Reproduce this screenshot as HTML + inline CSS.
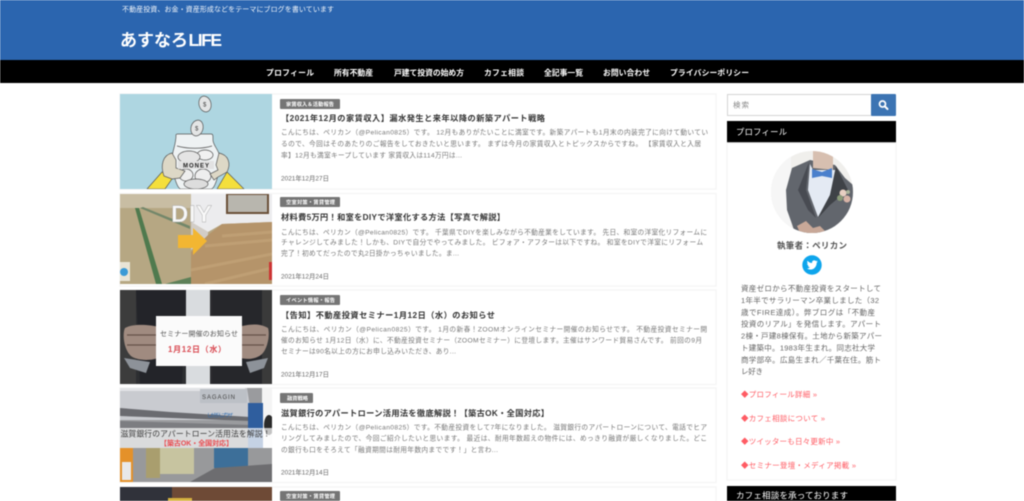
<!DOCTYPE html>
<html lang="ja"><head><meta charset="utf-8"><title>あすなろLIFE</title>
<style>
html,body{margin:0;padding:0;background:#fff;width:1024px;height:501px;overflow:hidden}
svg{display:block;filter:blur(.4px)}
text{font-family:"Liberation Sans","Noto Sans CJK JP",sans-serif}
.b{font-size:6.7px;fill:#777}
.t{font-size:8.2px;fill:#333;font-weight:700}
.d{font-size:6.4px;fill:#666}
.g{font-size:5.2px;fill:#fff;font-weight:700}
.n{font-size:7.8px;fill:#fff;font-weight:700}
.s{font-size:7.5px;fill:#666}
.l{font-size:7.5px;fill:#ff5c64}
</style></head><body>
<svg width="1024" height="501" viewBox="0 0 1024 501" xmlns="http://www.w3.org/2000/svg">
<defs>
<clipPath id="c1"><rect x="120" y="94" width="152" height="95"/></clipPath>
<clipPath id="c2"><rect x="120" y="194" width="152" height="90"/></clipPath>
<clipPath id="c3"><rect x="120" y="290" width="152" height="94"/></clipPath>
<clipPath id="c4"><rect x="120" y="388" width="152" height="94"/></clipPath>
<clipPath id="c5"><rect x="120" y="487" width="152" height="14"/></clipPath>
<clipPath id="av"><circle cx="812" cy="192" r="41"/></clipPath>
</defs>
<rect width="1024" height="501" fill="#fff"/>
<!-- header -->
<rect width="1024" height="60" fill="#2b65af"/>
<rect y="60" width="1024" height="23" fill="#000"/>
<text x="122" y="11.500" font-size="7px" fill="#f2f6fb" textLength="212">不動産投資、お金・資産形成などをテーマにブログを書いています</text>
<text x="120" y="46" font-size="17px" font-weight="700" fill="#fff" textLength="68">あすなろ</text>
<text x="188.500" y="46" font-size="17.500px" font-weight="700" fill="#fff" textLength="33.500">LIFE</text>
<text class="n" x="266" y="75.500" textLength="48">プロフィール</text>
<text class="n" x="334" y="75.500" textLength="39">所有不動産</text>
<text class="n" x="394" y="75.500" textLength="70">戸建て投資の始め方</text>
<text class="n" x="484" y="75.500" textLength="40">カフェ相談</text>
<text class="n" x="544" y="75.500" textLength="39">全記事一覧</text>
<text class="n" x="603" y="75.500" textLength="47">お問い合わせ</text>
<text class="n" x="670" y="75.500" textLength="79">プライバシーポリシー</text>
<!-- cards -->
<g fill="#fff" stroke="#f6f6f6" stroke-width="1.500">
<rect x="120" y="94" width="596" height="95"/>
<rect x="120" y="193.500" width="596" height="92.500"/>
<rect x="120" y="290" width="596" height="94.500"/>
<rect x="120" y="388" width="596" height="94.500"/>
<rect x="120" y="487" width="596" height="20"/>
</g>
<!-- thumb 1 -->
<g clip-path="url(#c1)">
<rect x="120" y="94" width="152" height="95" fill="#aed6e1"/>
<g stroke="#555" stroke-width=".7">
<path d="M147 189L162 172L172 179L165 189Z" fill="#f4df3c"/>
<path d="M217 189L227 172L244 189Z" fill="#f4df3c"/>
<path d="M176 135C176 134 177 134 178 134L211 134C213 134 213 135 213 140C213 146 220 150 220 160C220 172 215 189 211 189L181 189C177 189 172 172 172 160C172 150 176 146 176 135Z" fill="#eef2f3"/>
<path d="M177 146C188 149 202 149 212 146" fill="none"/>
<ellipse cx="205" cy="155" rx="8" ry="5" fill="#f1f1f1"/><ellipse cx="189" cy="157" rx="11" ry="6" fill="#e4e4e4"/>
<ellipse cx="203" cy="176" rx="8" ry="7" fill="#eee"/><ellipse cx="186" cy="175" rx="7" ry="6" fill="#eee"/><ellipse cx="196" cy="184" rx="12" ry="5" fill="#ddd"/>
<path d="M164 176C160 165 163 155 172 153L176 160L176 168L185 171L180 178L172 179Z" fill="#ddd8c6"/>
<path d="M227 172C231 164 229 155 219 153L216 165L218 170L210 174L214 180L218 177Z" fill="#ddd8c6"/>
<ellipse cx="197" cy="128" rx="6" ry="8" fill="#e3e5e5" transform="rotate(15 197 128)"/>
<ellipse cx="205" cy="104" rx="6" ry="8" fill="#e3e5e5" transform="rotate(-15 205 104)"/>
</g>
<rect x="178" y="161" width="36" height="8" fill="#e2e2e2"/>
<text x="183" y="167.500" font-size="6px" font-weight="700" fill="#222" textLength="26">MONEY</text>
<text x="195" y="130.500" font-size="6px" fill="#444">$</text>
<text x="203" y="106.500" font-size="6px" fill="#444">$</text>
</g>
<!-- thumb 2 -->
<g clip-path="url(#c2)">
<rect x="120" y="194" width="152" height="90" fill="#b6a783"/>
<rect x="120" y="194" width="72" height="14" fill="#c8bda3"/>
<path d="M135 208L139 208L162 284L156 284Z" fill="#4f7a4e"/>
<path d="M143 207L190 226L190 229L140 208Z" fill="#73876a"/>
<path d="M165 284L191 277L191 284Z" fill="#5d8058"/>
<path d="M191 194L272 194L272 222L222 224L208 232L191 222Z" fill="#ececee"/>
<path d="M191 222L208 232L208 236L191 250Z" fill="#d2cdc7"/>
<path d="M191 252L208 235L222 224L272 222L272 284L191 284Z" fill="#b5946a"/>
<path d="M191 270L272 254M205 284L272 268M222 236L272 232M205 246L272 240" stroke="#bf9f74" stroke-width="3"/>
<path d="M227 194H268V213H227Z" fill="#b8b6ae" stroke="#6a5038" stroke-width="2"/>
<path d="M178 235H193V228L207 241L193 255V248H178Z" fill="#f2b632"/>
<rect x="120" y="262" width="10" height="19" fill="#e9e4d6"/><circle cx="124" cy="272" r="4" fill="#3a9ad6"/>
<path d="M269 262H272V280H269Z" fill="#c33"/>
<text x="171" y="222" font-size="24px" font-weight="700" fill="#f8f8f8" stroke="#aaa" stroke-width=".4" textLength="41">DIY</text>
</g>
<!-- thumb 3 -->
<g clip-path="url(#c3)">
<rect x="120" y="290" width="152" height="94" fill="#2d2e31"/>
<rect x="120" y="290" width="16" height="94" fill="#3c3c3c"/><rect x="260" y="290" width="12" height="94" fill="#3a3a3a"/>
<path d="M136 290H186L182 384H140Z" fill="#232429"/><path d="M212 290H262V384H212Z" fill="#26272b"/>
<rect x="186" y="290" width="24" height="94" fill="#d9dcdf"/>
<path d="M124 358L150 362L146 373L130 368Z" fill="#8d9299"/><path d="M268 358L246 362L250 373L264 368Z" fill="#8d9299"/>
<path d="M125 328C134 323 150 325 160 327V357C150 362 136 360 131 356C124 350 122 334 125 328Z" fill="#a08b80"/>
<path d="M268 328C258 322 246 325 238 327V357C248 361 258 358 262 354C268 348 270 334 268 328Z" fill="#a08b80"/>
<path d="M127 335H156M127 345H156M240 335H266M240 345H264" stroke="#66524a" stroke-width="1.200"/>
<rect x="156" y="316" width="86" height="50" fill="#fbfbfb"/>
<text x="160" y="336" font-size="7px" fill="#555" textLength="78">セミナー開催のお知らせ</text>
<text x="168" y="352" font-size="8px" font-weight="700" fill="#d94a52" textLength="58">1月12日（水）</text>
</g>
<!-- thumb 4 -->
<g clip-path="url(#c4)">
<rect x="120" y="388" width="152" height="94" fill="#9a9b9e"/>
<rect x="262" y="388" width="10" height="60" fill="#f4f4f4"/>
<ellipse cx="269" cy="425" rx="5" ry="10" fill="#2a2a2a"/>
<path d="M120 388H247L252 420H120Z" fill="#c9cbd0"/>
<path d="M120 388H245V391H120Z" fill="#e2e3e6"/>
<path d="M120 408L170 412L250 417V421L120 416Z" fill="#6a6b70"/>
<path d="M200 389H247V403H200Z" fill="#bcc0c6"/>
<path d="M120 421L250 425V448H120Z" fill="#7c7d81"/>
<rect x="248" y="403" width="15" height="60" fill="#2f5e9e"/>
<text x="202" y="399" font-size="6px" fill="#444" textLength="33">SAGAGIN</text>
<text x="207" y="417" font-size="5px" fill="#2e6bb0" textLength="26">しがぎんプラザ</text>
<rect x="120" y="448" width="152" height="34" fill="#98999b"/>
<rect x="120" y="448" width="13" height="34" fill="#e4912a"/>
<rect x="122" y="462" width="9" height="18" fill="#e8e8e8"/>
<rect x="146" y="448" width="14" height="30" fill="#a99e6e"/>
<rect x="160" y="448" width="34" height="26" fill="#c7c4a0"/>
<rect x="214" y="448" width="34" height="20" fill="#3d6f99"/>
<path d="M120 482L190 482L215 468L272 464V482Z" fill="#6d6d70"/>
<rect x="120" y="428" width="152" height="20" fill="#fff" fill-opacity=".72"/>
<text x="120.500" y="436.500" font-size="7.800px" fill="#3d3d3d" textLength="150">滋賀銀行のアパートローン活用法を解説！</text>
<text x="160" y="445.500" font-size="7px" font-weight="700" fill="#ea4a4f" textLength="73">【築古OK・全国対応】</text>
</g>
<!-- thumb 5 -->
<g clip-path="url(#c5)">
<rect x="120" y="487" width="152" height="14" fill="#30323a"/>
<rect x="172" y="487" width="100" height="14" fill="#6e4a36"/>
<rect x="168" y="498" width="24" height="3" fill="#d7b340"/>
</g>
<!-- card 1 text -->
<rect x="280" y="99" width="60" height="10" rx="1" fill="#757575"/>
<text class="g" x="286" y="106" textLength="48">家賃収入＆活動報告</text>
<text class="t" x="281" y="121" textLength="264">【2021年12月の家賃収入】漏水発生と来年以降の新築アパート戦略</text>
<text class="b" x="281" y="134.500" textLength="427">こんにちは、ペリカン（@Pelican0825）です。 12月もありがたいことに満室です。新築アパートも1月末の内装完了に向けて動いてい</text>
<text class="b" x="281" y="146" textLength="420">るので、今回はそのあたりのご報告をしておきたいと思います。 まずは今月の家賃収入とトピックスからですね。 【家賃収入と入居</text>
<text class="b" x="281" y="157.500" textLength="181">率】12月も満室キープしています 家賃収入は114万円は...</text>
<text class="d" x="281" y="180.500" textLength="48">2021年12月27日</text>
<!-- card 2 text -->
<rect x="280" y="197" width="60" height="10" rx="1" fill="#757575"/>
<text class="g" x="286" y="204" textLength="49">空室対策・賃貸管理</text>
<text class="t" x="281" y="220" textLength="224">材料費5万円！和室をDIYで洋室化する方法【写真で解説】</text>
<text class="b" x="281" y="234.500" textLength="426">こんにちは、ペリカン（@Pelican0825）です。 千葉県でDIYを楽しみながら不動産業をしています。 先日、和室の洋室化リフォームに</text>
<text class="b" x="281" y="244.500" textLength="422">チャレンジしてみました！しかも、DIYで自分でやってみました。 ビフォア・アフターは以下ですね。 和室をDIYで洋室にリフォーム</text>
<text class="b" x="281" y="255.500" textLength="178">完了！初めてだったので丸2日掛かっちゃいました。ま...</text>
<text class="d" x="281" y="278.500" textLength="48">2021年12月24日</text>
<!-- card 3 text -->
<rect x="280" y="295" width="60" height="10" rx="1" fill="#757575"/>
<text class="g" x="286" y="302" textLength="49">イベント情報・報告</text>
<text class="t" x="281" y="318" textLength="214">【告知】不動産投資セミナー1月12日（水）のお知らせ</text>
<text class="b" x="281" y="331.500" textLength="426">こんにちは、ペリカン（@Pelican0825）です。 1月の新春！ZOOMオンラインセミナー開催のお知らせです。 不動産投資セミナー開</text>
<text class="b" x="281" y="342.500" textLength="421">催のお知らせ 1月12日（水）に、不動産投資セミナー（ZOOMセミナー）に登壇します。主催はサンワード貿易さんです。 前回の9月</text>
<text class="b" x="281" y="353.500" textLength="175">セミナーは90名以上の方にお申し込みいただき、あり...</text>
<text class="d" x="281" y="376.500" textLength="48">2021年12月17日</text>
<!-- card 4 text -->
<rect x="280" y="393" width="33" height="10" rx="1" fill="#757575"/>
<text class="g" x="287" y="400" textLength="21">融資戦略</text>
<text class="t" x="281" y="416" textLength="268">滋賀銀行のアパートローン活用法を徹底解説！【築古OK・全国対応】</text>
<text class="b" x="281" y="429.500" textLength="426">こんにちは、ペリカン（@Pelican0825）です。不動産投資をして7年になりました。 滋賀銀行のアパートローンについて、電話でヒア</text>
<text class="b" x="281" y="440.500" textLength="426">リングしてみましたので、今回ご紹介したいと思います。 最近は、耐用年数超えの物件には、めっきり融資が厳しくなりました。どこ</text>
<text class="b" x="281" y="452" textLength="217">の銀行も口をそろえて「融資期間は耐用年数内までです！」と言わ...</text>
<text class="d" x="281" y="474.500" textLength="48">2021年12月14日</text>
<!-- card 5 tag -->
<rect x="280" y="491" width="60" height="10" rx="1" fill="#757575"/>
<text class="g" x="286" y="498" textLength="49">空室対策・賃貸管理</text>
<!-- sidebar -->
<rect x="727.500" y="94.500" width="144" height="21" fill="#fff" stroke="#d5d5d5"/>
<text x="733" y="107.500" font-size="7.500px" fill="#888" textLength="16">検索</text>
<rect x="871" y="94" width="25" height="22" rx="1" fill="#3c74b3"/>
<circle cx="882.500" cy="104" r="3" fill="none" stroke="#fff" stroke-width="1.700"/>
<path d="M884.800 106.300L887.500 109" stroke="#fff" stroke-width="2" stroke-linecap="round"/>
<rect x="727" y="121" width="169" height="22" fill="#000"/>
<text x="736" y="135" font-size="8.300px" fill="#fff" textLength="51">プロフィール</text>
<rect x="727" y="143" width="169" height="337" fill="#fff" stroke="#f6f6f6" stroke-width="1.500"/>
<g clip-path="url(#av)">
<rect x="771" y="151" width="82" height="82" fill="#f0efec"/>
<rect x="771" y="151" width="20" height="82" fill="#f6f6f6"/>
<path d="M810 160L792 168L786 190L787 210L792 224L795 233H853V185L845 178L835 165Z" fill="#62666d"/>
<path d="M813 151H833V170L813 168Z" fill="#d7bfb0"/>
<path d="M810 164L813 170H836L830 195L818 217L808 190Z" fill="#e4eaf3"/>
<path d="M836 166L848 190L830 205L818 218L830 195Z" fill="#3f4247"/>
<path d="M809 162L806 190L816 218L808 210L798 190Z" fill="#484b52"/>
<path d="M812 169L822 172L832 168V178L822 176L812 178Z" fill="#4a80cc"/>
<circle cx="843" cy="193" r="3.500" fill="#e7cfc2"/><circle cx="847" cy="199" r="3.500" fill="#d7b3a6"/><circle cx="840" cy="198" r="3" fill="#8a9a78"/><circle cx="848" cy="192" r="2" fill="#a9b39a"/>
<path d="M797 226L806 221L813 228L820 226L827 233H800Z" fill="#c8a898"/>
</g>
<text x="777" y="248.500" font-size="8.500px" font-weight="700" fill="#555" textLength="70">執筆者：ペリカン</text>
<circle cx="812" cy="265" r="9.700" fill="#0ea5ec"/>
<path d="M807 268.500C809 269.800 812.500 270.100 814.500 268C816.200 266.400 816.700 264.500 816.700 262.800C817.200 262.400 817.600 262 817.900 261.500C817.400 261.700 816.900 261.800 816.400 261.900C816.900 261.500 817.300 261 817.500 260.500C817 260.800 816.400 261 815.900 261.100C815 260 813.100 260.200 812.400 261.300C812 262 812 262.500 812.100 263C810.100 262.900 808.500 262 807.500 260.700C806.900 261.800 807.200 263 808.100 263.700C807.700 263.700 807.400 263.600 807.100 263.400C807.100 264.600 807.900 265.500 808.900 265.800C808.600 265.900 808.200 265.900 807.900 265.800C808.200 266.700 809 267.300 810 267.300C809.100 268.100 808.100 268.500 807 268.500Z" fill="#fff"/>
<text class="s" x="741" y="291" textLength="140">資産ゼロから不動産投資をスタートして</text>
<text class="s" x="741" y="303" textLength="138">1年半でサラリーマン卒業しました（32</text>
<text class="s" x="741" y="315" textLength="134">歳でFIRE達成）。弊ブログは「不動産</text>
<text class="s" x="741" y="326.500" textLength="140">投資のリアル」を発信します。アパート</text>
<text class="s" x="741" y="338.500" textLength="141">2棟・戸建8棟保有。土地から新築アパー</text>
<text class="s" x="741" y="350.500" textLength="134">ト建築中。1983年生まれ。同志社大学</text>
<text class="s" x="741" y="362.500" textLength="140">商学部卒。広島生まれ／千葉在住。筋ト</text>
<text class="s" x="741" y="374" textLength="22">レ好き</text>
<text class="l" x="741" y="397" textLength="76">◆プロフィール詳細 »</text>
<text class="l" x="741" y="421" textLength="84">◆カフェ相談について »</text>
<text class="l" x="741" y="444" textLength="99">◆ツイッターも日々更新中 »</text>
<text class="l" x="741" y="468" textLength="115">◆セミナー登壇・メディア掲載 »</text>
<rect x="727" y="486" width="169" height="15" fill="#000"/>
<text x="736" y="498.500" font-size="8.500px" fill="#fff" textLength="112">カフェ相談を承っております</text>
</svg>
</body></html>
